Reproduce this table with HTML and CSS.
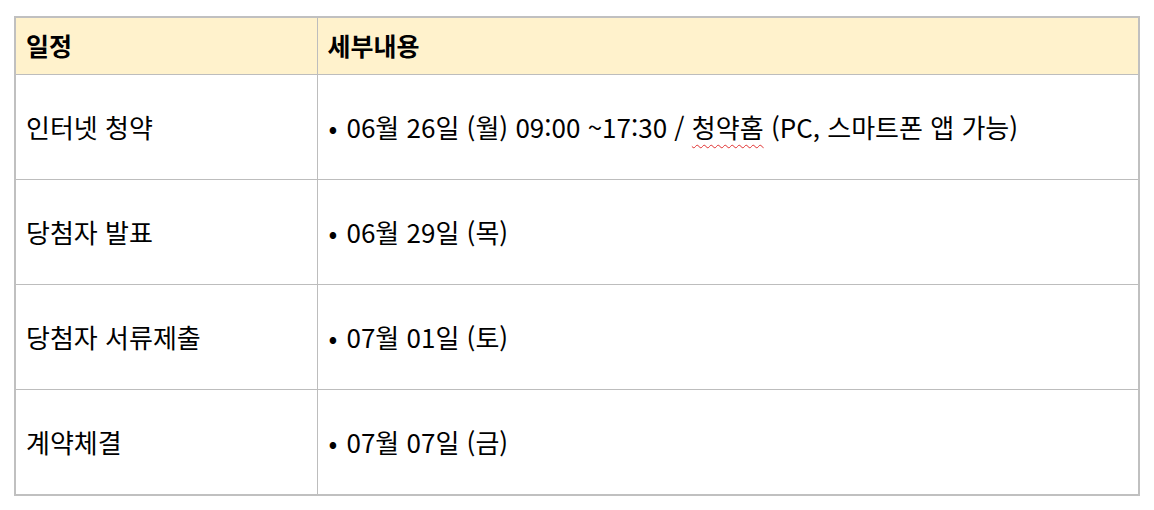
FILE: index.html
```html
<!DOCTYPE html>
<html lang="ko">
<head>
<meta charset="utf-8">
<link rel="stylesheet" href="styles.css">
</head>
<body>
<table class="schedule">
  <colgroup><col class="c1"><col class="c2"></colgroup>
  <thead>
    <tr class="head"><th>일정</th><th>세부내용</th></tr>
  </thead>
  <tbody>
    <tr><td>인터넷 청약</td><td><span class="item">06월 26일 (월) 09:00 ~17:30 / <span class="spell">청약홈</span> (PC, 스마트폰 앱 가능)</span></td></tr>
    <tr><td>당첨자 발표</td><td><span class="item">06월 29일 (목)</span></td></tr>
    <tr><td>당첨자 서류제출</td><td><span class="item">07월 01일 (토)</span></td></tr>
    <tr><td>계약체결</td><td><span class="item">07월 07일 (금)</span></td></tr>
  </tbody>
</table>
</body>
</html>
```
FILE: styles.css
```css
html, body {
  margin: 0;
  padding: 0;
  background: #ffffff;
}
body {
  padding: 16px 15px 0 14px;
  font-family: "Noto Sans CJK KR", "Noto Sans", sans-serif;
  color: #000;
}
.schedule {
  border-collapse: collapse;
  width: 1126px;
  table-layout: fixed;
  border: 2px solid #c0c0c0;
}
.c1 { width: 302px; }
.schedule th, .schedule td {
  border: 1px solid #bdbdbd;
  text-align: left;
  vertical-align: middle;
  padding: 0 0 0 10px;
  font-size: 26px;
  line-height: 30px;
}
.head th {
  background: #fff2cc;
  font-weight: 700;
  height: 54px;
  padding-bottom: 2px;
  font-size: 25px;
}
tbody td {
  height: 104px;
  font-weight: 400;
}
.item::before {
  content: "•";
  display: inline-block;
  width: 18px;
  margin-left: 1px;
}
.spell {
  text-decoration: underline wavy #e03030 1px;
  text-underline-offset: 6px;
}
```
